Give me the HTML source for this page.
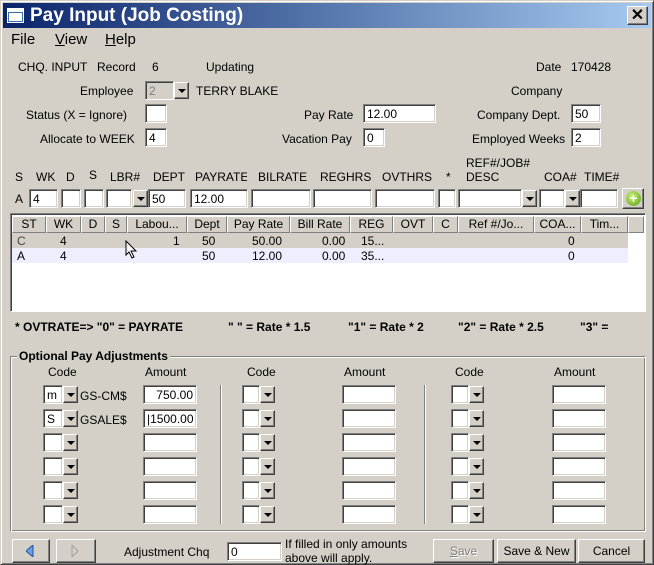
<!DOCTYPE html>
<html><head><style>
*{box-sizing:border-box;margin:0;padding:0}
body{width:654px;height:565px;background:#d4d0c8;font-family:"Liberation Sans",sans-serif;font-size:12px;color:#000;position:relative;overflow:hidden}
.a{position:absolute;white-space:nowrap}
.in{position:absolute;background:#fff;border:1px solid;border-color:#808080 #fff #fff #808080;box-shadow:inset 1px 1px 0 #404040,inset -1px -1px 0 #d4d0c8;height:19px;padding:2px 3px;font-size:12px;line-height:14px}
.dd{position:absolute;width:15px;height:17px;background:#d4d0c8;border:1px solid;border-color:#fff #404040 #404040 #fff;box-shadow:inset -1px -1px 0 #808080}
.dd:after{content:"";position:absolute;left:3px;top:6px;border-left:4px solid transparent;border-right:4px solid transparent;border-top:4px solid #000}
.btn{position:absolute;background:#d4d0c8;border:1px solid;border-color:#fff #404040 #404040 #fff;box-shadow:inset -1px -1px 0 #808080;text-align:center;line-height:22px}
.b{font-weight:bold}
.hd{position:absolute;top:216px;height:17px;border:1px solid;border-color:#fff #808080 #808080 #fff;line-height:15px;text-align:center;background:#d4d0c8}
.vl{position:absolute;width:2px;border-left:1px solid #808080;border-right:1px solid #fff}
</style></head><body>
<div class="a" style="left:0;top:0;width:654px;height:565px;border:1px solid;border-color:#d4d0c8 #404040 #404040 #d4d0c8;box-shadow:inset 1px 1px 0 #fff,inset -1px -1px 0 #808080"></div>
<div class="a" style="left:3px;top:3px;width:648px;height:25px;background:linear-gradient(90deg,#0a246a,#a6caf0)"></div>
<div class="a" style="left:7px;top:8px;width:17px;height:15px;background:#fff;border:1px solid #fff;border-top:4px solid #fff;box-shadow:inset 0 0 0 1px #3a6ea5"></div>
<div class="a b" style="left:30px;top:4px;color:#fff;font-size:19px;line-height:24px">Pay Input (Job Costing)</div>
<div class="btn" style="left:627px;top:6px;width:21px;height:19px;line-height:17px;font-size:16px;font-weight:bold">✕</div>
<div class="a" style="left:11px;top:31px;font-size:15px">File</div>
<div class="a" style="left:55px;top:31px;font-size:15px"><u>V</u>iew</div>
<div class="a" style="left:105px;top:31px;font-size:15px"><u>H</u>elp</div>

<div class="a" style="left:18px;top:60px">CHQ. INPUT</div>
<div class="a" style="left:97px;top:60px">Record</div>
<div class="a" style="left:152px;top:60px">6</div>
<div class="a" style="left:206px;top:60px">Updating</div>
<div class="a" style="left:536px;top:60px">Date</div>
<div class="a" style="left:571px;top:60px">170428</div>

<div class="a" style="left:80px;top:84px">Employee</div>
<div class="in" style="left:145px;top:81px;width:29px;background:#d4d0c8;color:#808080">2</div>
<div class="dd" style="left:174px;top:82px"></div>
<div class="a" style="left:196px;top:84px">TERRY BLAKE</div>
<div class="a" style="left:511px;top:84px">Company</div>

<div class="a" style="left:26px;top:108px">Status (X = Ignore)</div>
<div class="in" style="left:145px;top:104px;width:22px"></div>
<div class="a" style="left:304px;top:108px">Pay Rate</div>
<div class="in" style="left:363px;top:104px;width:73px">12.00</div>
<div class="a" style="left:477px;top:108px">Company Dept.</div>
<div class="in" style="left:571px;top:104px;width:30px">50</div>

<div class="a" style="left:40px;top:132px">Allocate to WEEK</div>
<div class="in" style="left:145px;top:128px;width:22px">4</div>
<div class="a" style="left:282px;top:132px">Vacation Pay</div>
<div class="in" style="left:363px;top:128px;width:22px">0</div>
<div class="a" style="left:472px;top:132px">Employed Weeks</div>
<div class="in" style="left:571px;top:128px;width:30px">2</div>

<div class="a" style="left:15px;top:170px">S</div>
<div class="a" style="left:36px;top:170px">WK</div>
<div class="a" style="left:66px;top:170px">D</div>
<div class="a" style="left:89px;top:168px">S</div>
<div class="a" style="left:110px;top:170px">LBR#</div>
<div class="a" style="left:153px;top:170px">DEPT</div>
<div class="a" style="left:195px;top:170px;width:52px;overflow:hidden">PAYRATE</div>
<div class="a" style="left:258px;top:170px">BILRATE</div>
<div class="a" style="left:320px;top:170px">REGHRS</div>
<div class="a" style="left:382px;top:170px">OVTHRS</div>
<div class="a" style="left:446px;top:170px">*</div>
<div class="a" style="left:466px;top:156px">REF#/JOB#</div>
<div class="a" style="left:466px;top:170px">DESC</div>
<div class="a" style="left:544px;top:170px">COA#</div>
<div class="a" style="left:584px;top:170px">TIME#</div>

<div class="a" style="left:15px;top:192px">A</div>
<div class="in" style="left:29px;top:189px;width:29px">4</div>
<div class="in" style="left:61px;top:189px;width:20px"></div>
<div class="in" style="left:84px;top:189px;width:20px"></div>
<div class="in" style="left:106px;top:189px;width:26px"></div>
<div class="dd" style="left:133px;top:190px"></div>
<div class="in" style="left:148px;top:189px;width:38px">50</div>
<div class="in" style="left:190px;top:189px;width:58px">12.00</div>
<div class="in" style="left:251px;top:189px;width:60px"></div>
<div class="in" style="left:313px;top:189px;width:59px"></div>
<div class="in" style="left:375px;top:189px;width:60px"></div>
<div class="in" style="left:438px;top:189px;width:18px"></div>
<div class="in" style="left:458px;top:189px;width:64px"></div>
<div class="dd" style="left:522px;top:190px"></div>
<div class="in" style="left:539px;top:189px;width:26px"></div>
<div class="dd" style="left:565px;top:190px"></div>
<div class="in" style="left:580px;top:189px;width:38px"></div>
<div class="btn" style="left:622px;top:188px;width:22px;height:21px"></div>
<div class="a" style="left:626px;top:191px;width:15px;height:15px;border-radius:50%;background:radial-gradient(circle at 40% 35%,#c8f07a,#5a9e10);color:#fff;font-weight:bold;font-size:14px;line-height:15px;text-align:center">+</div>

<div class="a" style="left:10px;top:213px;width:636px;height:99px;background:#fff;border:1px solid;border-color:#808080 #fff #fff #808080;box-shadow:inset 1px 1px 0 #404040"></div>
<div class="hd" style="left:12px;width:34px">ST</div>
<div class="hd" style="left:46px;width:35px">WK</div>
<div class="hd" style="left:81px;width:24px">D</div>
<div class="hd" style="left:105px;width:22px">S</div>
<div class="hd" style="left:127px;width:60px">Labou...</div>
<div class="hd" style="left:187px;width:40px">Dept</div>
<div class="hd" style="left:227px;width:63px">Pay Rate</div>
<div class="hd" style="left:290px;width:60px">Bill Rate</div>
<div class="hd" style="left:350px;width:43px">REG</div>
<div class="hd" style="left:393px;width:40px">OVT</div>
<div class="hd" style="left:433px;width:25px">C</div>
<div class="hd" style="left:458px;width:76px">Ref #/Jo...</div>
<div class="hd" style="left:534px;width:47px">COA...</div>
<div class="hd" style="left:581px;width:47px">Tim...</div>
<div class="hd" style="left:628px;width:16px"></div>
<div class="a" style="left:12px;top:233px;width:616px;height:15px;background:#d4d0c8"></div>
<div class="a" style="left:12px;top:248px;width:616px;height:15px;background:#eeeeff"></div>
<div class="a" style="left:17px;top:234px;color:#444">C</div><div class="a" style="left:60px;top:234px">4</div><div class="a" style="left:173px;top:234px">1</div><div class="a" style="left:202px;top:234px">50</div><div class="a" style="left:252px;top:234px">50.00</div><div class="a" style="left:322px;top:234px">0.00</div><div class="a" style="left:361px;top:234px">15...</div><div class="a" style="left:568px;top:234px">0</div>
<div class="a" style="left:17px;top:249px">A</div><div class="a" style="left:60px;top:249px">4</div><div class="a" style="left:202px;top:249px">50</div><div class="a" style="left:252px;top:249px">12.00</div><div class="a" style="left:322px;top:249px">0.00</div><div class="a" style="left:361px;top:249px">35...</div><div class="a" style="left:568px;top:249px">0</div>
<svg class="a" style="left:125px;top:240px" width="14" height="20"><path d="M1 1 L1 15 L4 12 L7 18 L9 17 L6 11 L11 11 Z" fill="#fff" stroke="#000"/></svg>

<div class="a b" style="left:15px;top:320px">* OVTRATE=&gt; "0" = PAYRATE</div>
<div class="a b" style="left:228px;top:320px">" " = Rate * 1.5</div>
<div class="a b" style="left:348px;top:320px">"1" = Rate * 2</div>
<div class="a b" style="left:458px;top:320px">"2" = Rate * 2.5</div>
<div class="a b" style="left:580px;top:320px">"3" =</div>

<div class="a" style="left:10px;top:356px;width:636px;height:176px;border:1px solid;border-color:#808080 #fff #fff #808080;box-shadow:inset 1px 1px 0 #fff,inset -1px -1px 0 #808080"></div>
<div class="a b" style="left:17px;top:349px;background:#d4d0c8;padding:0 2px">Optional Pay Adjustments</div>
<div class="a" style="left:48px;top:365px">Code</div>
<div class="a" style="left:145px;top:365px">Amount</div>
<div class="a" style="left:247px;top:365px">Code</div>
<div class="a" style="left:344px;top:365px">Amount</div>
<div class="a" style="left:455px;top:365px">Code</div>
<div class="a" style="left:554px;top:365px">Amount</div>
<div class="vl" style="left:220px;top:385px;height:139px"></div>
<div class="vl" style="left:424px;top:385px;height:139px"></div>

<div class="in" style="left:43px;top:385px;width:20px">m</div><div class="dd" style="left:63px;top:386px"></div><div class="a" style="left:80px;top:389px">GS-CM$</div><div class="in" style="left:143px;top:385px;width:54px;text-align:right">750.00</div>
<div class="in" style="left:43px;top:409px;width:20px">S</div><div class="dd" style="left:63px;top:410px"></div><div class="a" style="left:80px;top:413px">GSALE$</div><div class="in" style="left:143px;top:409px;width:54px;text-align:right">|1500.00</div>
<div class="in" style="left:43px;top:433px;width:20px"></div><div class="dd" style="left:63px;top:434px"></div><div class="in" style="left:143px;top:433px;width:54px"></div>
<div class="in" style="left:43px;top:457px;width:20px"></div><div class="dd" style="left:63px;top:458px"></div><div class="in" style="left:143px;top:457px;width:54px"></div>
<div class="in" style="left:43px;top:481px;width:20px"></div><div class="dd" style="left:63px;top:482px"></div><div class="in" style="left:143px;top:481px;width:54px"></div>
<div class="in" style="left:43px;top:505px;width:20px"></div><div class="dd" style="left:63px;top:506px"></div><div class="in" style="left:143px;top:505px;width:54px"></div>

<div class="in" style="left:242px;top:385px;width:18px"></div><div class="dd" style="left:260px;top:386px"></div><div class="in" style="left:342px;top:385px;width:54px"></div>
<div class="in" style="left:242px;top:409px;width:18px"></div><div class="dd" style="left:260px;top:410px"></div><div class="in" style="left:342px;top:409px;width:54px"></div>
<div class="in" style="left:242px;top:433px;width:18px"></div><div class="dd" style="left:260px;top:434px"></div><div class="in" style="left:342px;top:433px;width:54px"></div>
<div class="in" style="left:242px;top:457px;width:18px"></div><div class="dd" style="left:260px;top:458px"></div><div class="in" style="left:342px;top:457px;width:54px"></div>
<div class="in" style="left:242px;top:481px;width:18px"></div><div class="dd" style="left:260px;top:482px"></div><div class="in" style="left:342px;top:481px;width:54px"></div>
<div class="in" style="left:242px;top:505px;width:18px"></div><div class="dd" style="left:260px;top:506px"></div><div class="in" style="left:342px;top:505px;width:54px"></div>

<div class="in" style="left:451px;top:385px;width:18px"></div><div class="dd" style="left:469px;top:386px"></div><div class="in" style="left:552px;top:385px;width:54px"></div>
<div class="in" style="left:451px;top:409px;width:18px"></div><div class="dd" style="left:469px;top:410px"></div><div class="in" style="left:552px;top:409px;width:54px"></div>
<div class="in" style="left:451px;top:433px;width:18px"></div><div class="dd" style="left:469px;top:434px"></div><div class="in" style="left:552px;top:433px;width:54px"></div>
<div class="in" style="left:451px;top:457px;width:18px"></div><div class="dd" style="left:469px;top:458px"></div><div class="in" style="left:552px;top:457px;width:54px"></div>
<div class="in" style="left:451px;top:481px;width:18px"></div><div class="dd" style="left:469px;top:482px"></div><div class="in" style="left:552px;top:481px;width:54px"></div>
<div class="in" style="left:451px;top:505px;width:18px"></div><div class="dd" style="left:469px;top:506px"></div><div class="in" style="left:552px;top:505px;width:54px"></div>

<div class="btn" style="left:12px;top:539px;width:38px;height:24px"></div>
<svg class="a" style="left:26px;top:545px" width="8" height="12"><path d="M7 0 L0 6 L7 12 Z" fill="#6aa0e0" stroke="#2050a0"/></svg>
<div class="btn" style="left:56px;top:539px;width:40px;height:24px"></div>
<svg class="a" style="left:71px;top:545px" width="8" height="12"><path d="M1 0 L7 6 L1 12 Z" fill="#d4d0c8" stroke="#a0a0a0"/></svg>
<div class="a" style="left:124px;top:545px">Adjustment Chq</div>
<div class="in" style="left:227px;top:542px;width:55px">0</div>
<div class="a" style="left:285px;top:537px;line-height:14px">If filled in only amounts<br>above will apply.</div>
<div class="btn" style="left:433px;top:539px;width:61px;height:24px;color:#808080;text-shadow:1px 1px 0 #fff"><u>S</u>ave</div>
<div class="btn" style="left:497px;top:539px;width:79px;height:24px">Save &amp; New</div>
<div class="btn" style="left:578px;top:539px;width:67px;height:24px">Cancel</div>
</body></html>
